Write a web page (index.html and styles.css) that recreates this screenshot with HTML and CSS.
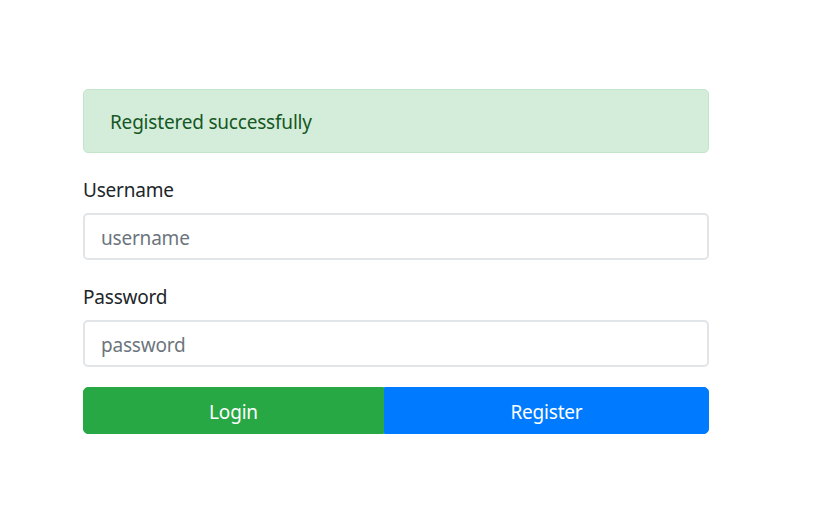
FILE: index.html
```
<!DOCTYPE html>
<html lang="en">
<head>
<meta charset="utf-8">
<title>Login</title>
<link rel="stylesheet" href="styles.css">
</head>
<body>
<main class="page">
  <form class="login-form">
    <div class="alert">Registered successfully</div>
    <div class="form-group">
      <label class="label" for="username">Username</label>
      <input class="input" id="username" type="text" placeholder="username">
    </div>
    <div class="form-group">
      <label class="label" for="password">Password</label>
      <input class="input" id="password" type="password" placeholder="password">
    </div>
    <div class="btn-group">
      <button type="button" class="btn btn-login">Login</button>
      <button type="button" class="btn btn-register">Register</button>
    </div>
  </form>
</main>
</body>
</html>
```
FILE: styles.css
```
* { box-sizing: border-box; }
html, body { margin: 0; padding: 0; background: #fff; }
body {
  font-family: "Noto Sans", "Open Sans", "Liberation Sans", sans-serif;
  font-size: 19px;
  letter-spacing: -0.2px;
  line-height: 30px;
  color: #212529;
}
.page {
  padding: 89px 0 0 83px;
}
.login-form {
  width: 626px;
}
.alert {
  background: #d4edda;
  border: 1px solid #c3e6cb;
  color: #155724;
  border-radius: 5px;
  padding: 17px 26px 0;
  height: 64px;
  margin-bottom: 20px;
}
.form-group {
  margin-bottom: 20px;
}
.label {
  display: block;
  margin-bottom: 10px;
  padding-top: 2px;
  height: 30px;
}
.input {
  display: block;
  width: 100%;
  height: 47px;
  padding: 8px 16px 6px;
  font: inherit;
  letter-spacing: inherit;
  color: #495057;
  border: 2px solid #e2e5e8;
  border-radius: 5px;
  background: #fff;
}
.input::placeholder { color: #6c757d; opacity: 1; }
.btn-group {
  display: flex;
  height: 47px;
}
.btn {
  font: inherit;
  letter-spacing: inherit;
  color: #fff;
  border: 1px solid transparent;
  padding: 2px 15px 0;
  cursor: pointer;
}
.btn-login {
  flex: 0 0 301px;
  background: #28a745;
  border-color: #28a745;
  border-radius: 5px 0 0 5px;
}
.btn-register {
  flex: 1 1 auto;
  background: #007bff;
  border-color: #007bff;
  border-radius: 0 5px 5px 0;
}
```
